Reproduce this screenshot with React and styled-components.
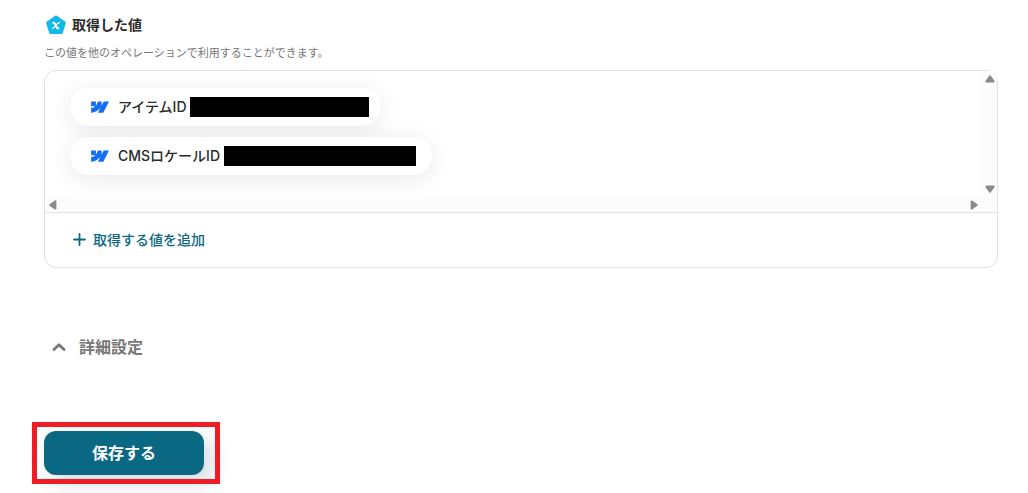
import React from "react";
import styled, { createGlobalStyle } from "styled-components";

const GlobalStyle = createGlobalStyle`
  * { box-sizing: border-box; }
  body {
    margin: 0;
    background: #ffffff;
    color: #2b2b2b;
    font-family: Inter, "Noto Sans CJK JP", sans-serif;
  }
  button { font-family: inherit; cursor: pointer; }
`;

const Page = styled.main`
  padding: 15px 30px 18px 44px;
`;

const Heading = styled.h2`
  display: flex;
  align-items: center;
  gap: 6px;
  height: 20px;
  margin: 0;
  padding-left: 2px;
  font-size: 14px;
  line-height: 20px;
  font-weight: 700;
`;

const Description = styled.p`
  margin: 10px 0 9px;
  color: #777777;
  font-size: 11px;
  line-height: 16px;
`;

const Panel = styled.section`
  border: 1px solid #e2e2e2;
  border-radius: 12px;
`;

const ScrollArea = styled.div`
  display: grid;
  grid-template-columns: 1fr 15px;
  grid-template-rows: 126px 15px;
  border-bottom: 1px solid #e2e2e2;
`;

const ChipList = styled.ul`
  display: flex;
  flex-direction: column;
  align-items: flex-start;
  gap: 11px;
  margin: 0;
  padding: 17px 25px;
  overflow: hidden;
  border-top-left-radius: 11px;
  list-style: none;
`;

const Chip = styled.li`
  display: flex;
  align-items: center;
  height: 38px;
  padding: 0 ${(p) => p.$end}px 0 20px;
  border-radius: 20px;
  background: #ffffff;
  box-shadow: 0 4px 24px rgba(0, 0, 0, 0.09);
  font-size: 14px;
  line-height: 20px;
  font-weight: 500;
  white-space: nowrap;
`;

const ChipLabel = styled.span`
  width: ${(p) => p.$width}px;
  margin-left: 8px;
`;

const Redaction = styled.span`
  width: ${(p) => p.$width}px;
  height: 20px;
  background: #000000;
`;

const ScrollTrack = styled.div`
  display: flex;
  flex-direction: ${(p) => (p.$vertical ? "column" : "row")};
  align-items: center;
  justify-content: space-between;
  padding: 3px;
  border-top-right-radius: ${(p) => (p.$vertical ? 4 : 0)}px;
  background: #fcfcfc;
`;

const Corner = styled.div`
  background: #fcfcfc;
`;

const AddButton = styled.button`
  display: flex;
  align-items: center;
  gap: 6px;
  margin: 0 28px;
  padding: 17px 0;
  border: 0;
  background: none;
  color: #0b6882;
  font-size: 14px;
  line-height: 20px;
  font-weight: 500;
`;

const DetailToggle = styled.button`
  display: flex;
  align-items: center;
  gap: 13px;
  margin: 67px 0 72px;
  padding: 0 8px;
  border: 0;
  background: none;
  color: #777777;
  font-size: 16px;
  line-height: 24px;
  font-weight: 700;
`;

const Highlight = styled.div`
  position: relative;
  width: fit-content;
  &::after {
    content: "";
    position: absolute;
    inset: -9px -16px -9px -12px;
    border: 5px solid #ee1c25;
    pointer-events: none;
  }
`;

const SaveButton = styled.button`
  display: block;
  width: 160px;
  height: 44px;
  border: 0;
  border-radius: 12px;
  background: #0b6882;
  box-shadow: 8px 8px 20px rgba(20, 50, 70, 0.18);
  color: #ffffff;
  font-size: 16px;
  line-height: 24px;
  font-weight: 700;
`;

const PentagonIcon = () => (
  <svg width="20" height="20" viewBox="0 0 20 20" aria-hidden="true">
    <path
      d="M10 2 18.4 7.9 15.3 17.6H4.7L1.6 7.9Z"
      fill="#12b8ea"
      stroke="#12b8ea"
      strokeWidth="3"
      strokeLinejoin="round"
    />
    <path
      d="M7.2 7.8H8.3L11.2 13.2H12.4"
      fill="none"
      stroke="#ffffff"
      strokeWidth="1.9"
      strokeLinecap="round"
      strokeLinejoin="round"
    />
    <path
      d="M13.3 7.7C12 7.7 10.8 9.5 9.8 10.6S8 13.2 6.5 13.2"
      fill="none"
      stroke="#ffffff"
      strokeWidth="1.3"
      strokeLinecap="round"
    />
  </svg>
);

const WebflowIcon = () => (
  <svg width="20" height="20" viewBox="0 0 20 20" aria-hidden="true">
    <path
      d="M19 4.5 13.3 15.7H7.9L10.3 11H10.2C8.2 13.6 5.3 15.3 1.1 15.7V11.1S3.8 10.9 5.4 9.3H1.1V4.5H5.9V8.4H6L8 4.5H11.6V8.4H11.7L13.7 4.5Z"
      fill="#146ef5"
    />
  </svg>
);

const Arrow = ({ rotate }) => (
  <svg width="10" height="10" viewBox="0 0 10 10" aria-hidden="true">
    <path
      d="M5 2.2 8.6 7.4H1.4Z"
      fill="#8a8a8a"
      stroke="#8a8a8a"
      strokeWidth="2"
      strokeLinejoin="round"
      transform={`rotate(${rotate} 5 5)`}
    />
  </svg>
);

const PlusIcon = () => (
  <svg width="14" height="14" viewBox="0 0 14 14" aria-hidden="true">
    <path d="M6.5 1V12M1 6.5H12" stroke="currentColor" strokeWidth="1.8" strokeLinecap="round" />
  </svg>
);

const ChevronIcon = () => (
  <svg width="14" height="14" viewBox="0 0 14 14" aria-hidden="true">
    <path
      d="M2 9.6 7 4.8 12 9.6"
      fill="none"
      stroke="currentColor"
      strokeWidth="2.8"
      strokeLinecap="round"
      strokeLinejoin="round"
    />
  </svg>
);

const values = [
  { label: "アイテムID", width: 72, redacted: 179, end: 12 },
  { label: "CMSロケールID", width: 106, redacted: 192, end: 16 },
];

export default function App() {
  return (
    <>
      <GlobalStyle />
      <Page>
        <Heading>
          <PentagonIcon />
          取得した値
        </Heading>
        <Description>この値を他のオペレーションで利用することができます。</Description>
        <Panel>
          <ScrollArea>
            <ChipList>
              {values.map((v) => (
                <Chip key={v.label} $end={v.end}>
                  <WebflowIcon />
                  <ChipLabel $width={v.width}>{v.label}</ChipLabel>
                  <Redaction $width={v.redacted} />
                </Chip>
              ))}
            </ChipList>
            <ScrollTrack $vertical>
              <Arrow rotate={0} />
              <Arrow rotate={180} />
            </ScrollTrack>
            <ScrollTrack>
              <Arrow rotate={-90} />
              <Arrow rotate={90} />
            </ScrollTrack>
            <Corner />
          </ScrollArea>
          <AddButton type="button">
            <PlusIcon />
            取得する値を追加
          </AddButton>
        </Panel>
        <DetailToggle type="button" aria-expanded="true">
          <ChevronIcon />
          詳細設定
        </DetailToggle>
        <Highlight>
          <SaveButton type="button">保存する</SaveButton>
        </Highlight>
      </Page>
    </>
  );
}
